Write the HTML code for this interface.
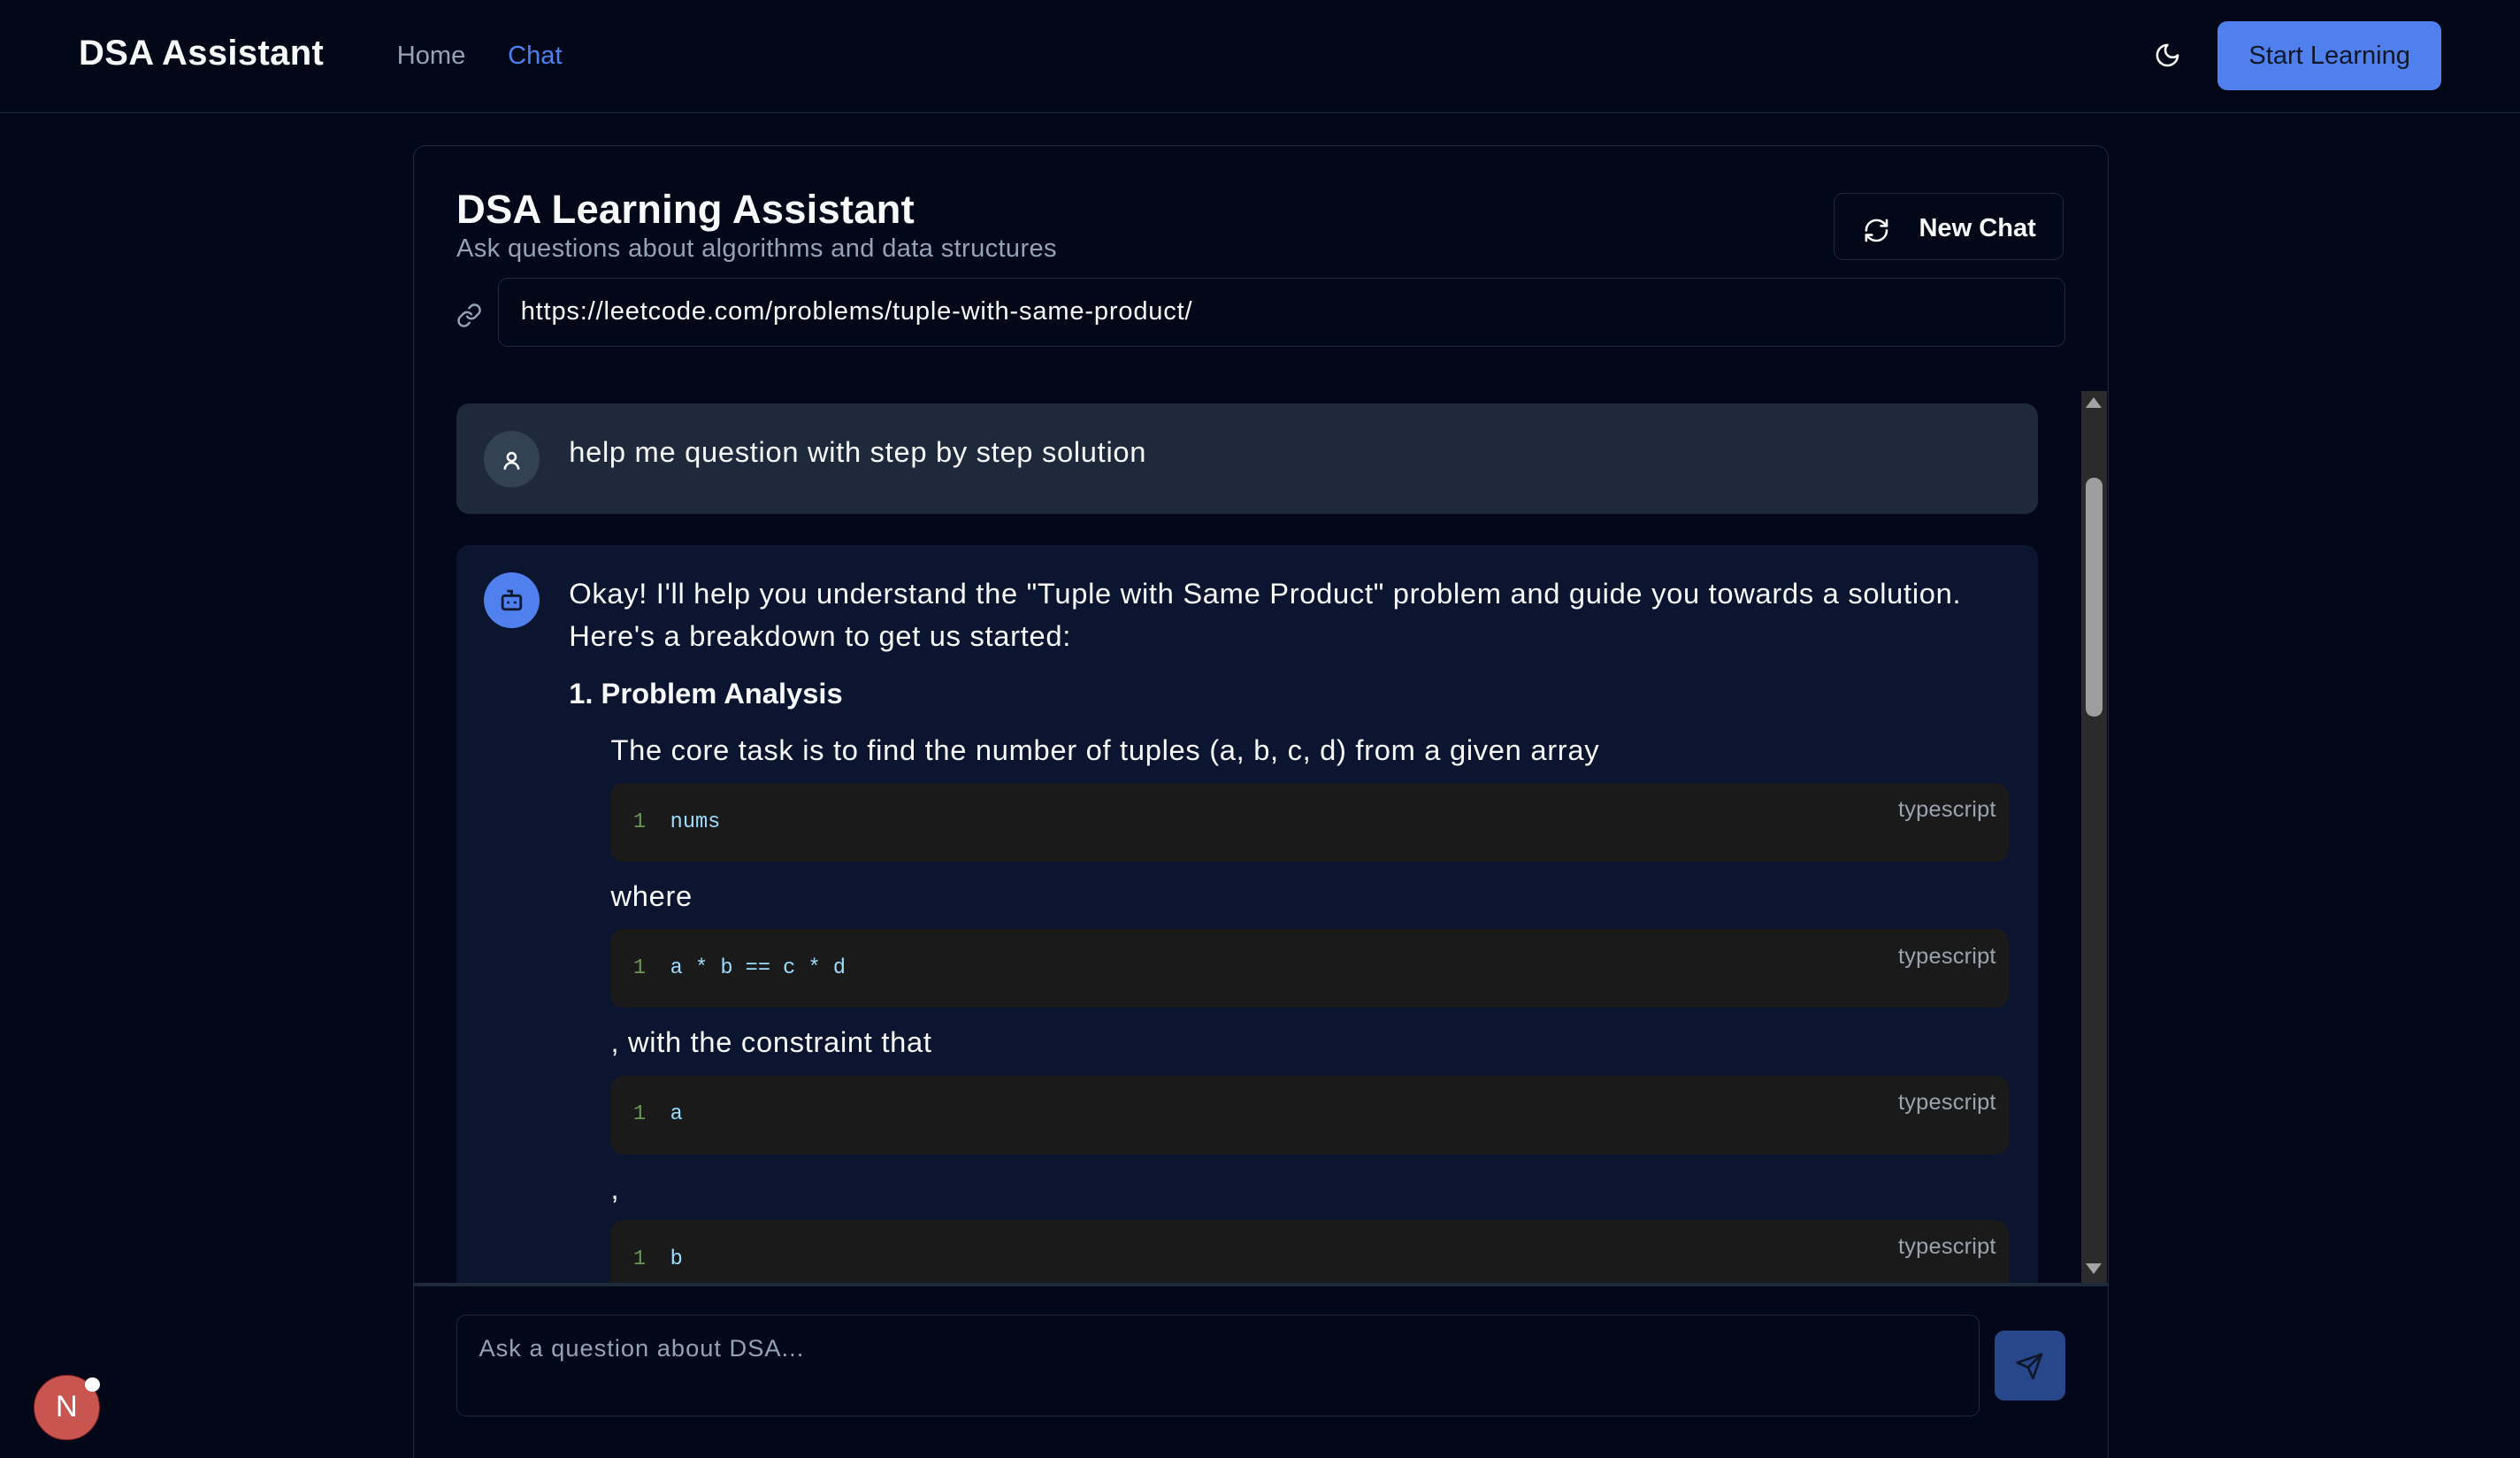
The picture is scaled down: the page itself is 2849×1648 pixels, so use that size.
<!DOCTYPE html>
<html><head><meta charset="utf-8"><style>
html,body{margin:0;padding:0;background:#020817;overflow:hidden}
body{width:1568px;height:907px;zoom:1.81696;position:relative;font-family:"Liberation Sans",sans-serif;color:#f8fafc}
.a{position:absolute}
.hdr{left:0;top:0;width:1568px;height:70px;border-bottom:1px solid #1e293b}
.code{position:absolute;left:380px;width:870px;background:#1a1a1a;border-radius:8px;height:49px}
.code .n{position:absolute;left:14px;top:17px;font:13px "Liberation Mono",monospace;color:#6a9955}
.code .c{position:absolute;left:37px;top:17px;font:13px "Liberation Mono",monospace;color:#9cdcfe}
.code .l{position:absolute;right:8px;top:9px;font-size:14px;color:#9ca3af;letter-spacing:0.1px}
.t{position:absolute;font-size:18px;color:#f8fafc;white-space:nowrap;letter-spacing:0.38px}
</style></head><body>
<div class="a hdr"></div>
<div class="a" style="left:49px;top:21px;font-size:22px;font-weight:bold;letter-spacing:0.2px">DSA Assistant</div>
<div class="a" style="left:247px;top:26px;font-size:16px;color:#94a3b8">Home</div>
<div class="a" style="left:316px;top:26px;font-size:16px;color:#4f80ee">Chat</div>
<svg class="a" style="left:1340px;top:26px" width="17" height="17" viewBox="0 0 24 24" fill="none" stroke="#fff" stroke-width="2" stroke-linecap="round" stroke-linejoin="round"><path d="M12 3a6 6 0 0 0 9 9 9 9 0 1 1-9-9Z"/></svg>
<div class="a" style="left:1380px;top:13px;width:139px;height:43px;background:#4f80ee;border-radius:6px;color:#0f172a;font-size:16px;line-height:43px;text-align:center">Start Learning</div>

<div class="a" style="left:257px;top:90px;width:1054px;height:830px;border:1px solid #1e293b;border-radius:8px"></div>
<div class="a" style="left:284px;top:116px;font-size:25px;font-weight:bold;letter-spacing:0.1px">DSA Learning Assistant</div>
<div class="a" style="left:284px;top:146px;font-size:16px;color:#94a3b8;letter-spacing:0.2px">Ask questions about algorithms and data structures</div>
<div class="a" style="left:1141px;top:120px;width:143px;height:42px;border:1px solid #1e293b;border-radius:6px;box-sizing:border-box"></div>
<svg class="a" style="left:1159px;top:135px" width="17" height="17" viewBox="0 0 24 24" fill="none" stroke="#fff" stroke-width="2" stroke-linecap="round" stroke-linejoin="round"><path d="M3 12a9 9 0 0 1 9-9 9.75 9.75 0 0 1 6.74 2.74L21 8"/><path d="M21 3v5h-5"/><path d="M21 12a9 9 0 0 1-9 9 9.75 9.75 0 0 1-6.74-2.74L3 16"/><path d="M8 16H3v5"/></svg>
<div class="a" style="left:1194px;top:133px;font-size:16px;font-weight:bold">New Chat</div>
<svg class="a" style="left:284px;top:188px" width="16" height="16" viewBox="0 0 24 24" fill="none" stroke="#94a3b8" stroke-width="2" stroke-linecap="round"><path d="M10 13a5 5 0 0 0 7.54.54l3-3a5 5 0 0 0-7.07-7.07l-1.72 1.71"/><path d="M14 11a5 5 0 0 0-7.54-.54l-3 3a5 5 0 0 0 7.07 7.07l1.71-1.71"/></svg>
<div class="a" style="left:310px;top:173px;width:975px;height:43px;border:1px solid #1e293b;border-radius:6px;box-sizing:border-box"></div>
<div class="a" style="left:324px;top:185px;font-size:16px;letter-spacing:0.45px">https://leetcode.com/problems/tuple-with-same-product/</div>

<div class="a" style="left:284px;top:251px;width:984px;height:69px;background:#1e293b;border-radius:8px"></div>
<div class="a" style="left:301px;top:268px;width:35px;height:35px;border-radius:50%;background:#334155"></div>
<svg class="a" style="left:310px;top:278px" width="17" height="17" viewBox="0 0 24 24" fill="none" stroke="#fff" stroke-width="2"><circle cx="12" cy="9" r="3.5"/><path d="M6 20a6 6 0 0 1 12 0"/></svg>
<div class="t" style="left:354px;top:271px">help me question with step by step solution</div>

<div class="a" style="left:257px;top:243px;width:1038px;height:555px;overflow:hidden">
<div class="a" style="left:27px;top:96px;width:984px;height:600px;background:#0b1530;border-radius:8px"></div>
</div>
<div class="a" style="left:301px;top:356px;width:35px;height:35px;border-radius:50%;background:#4f80ee"></div>
<svg class="a" style="left:310px;top:365px" width="17" height="17" viewBox="0 0 24 24" fill="none" stroke="#0f172a" stroke-width="2.2"><path d="M12 8V4H8"/><rect x="4" y="8" width="16" height="12" rx="2"/><path d="M9 13v2M15 13v2"/></svg>
<div class="t" style="left:354px;top:359px">Okay! I'll help you understand the "Tuple with Same Product" problem and guide you towards a solution.</div>
<div class="t" style="left:354px;top:385px">Here's a breakdown to get us started:</div>
<div class="t" style="left:354px;top:421px;font-weight:bold;letter-spacing:0">1. Problem Analysis</div>
<div class="t" style="left:380px;top:456px">The core task is to find the number of tuples (a, b, c, d) from a given array</div>
<div class="code" style="top:487px"><span class="n">1</span><span class="c">nums</span><span class="l">typescript</span></div>
<div class="t" style="left:380px;top:547px">where</div>
<div class="code" style="top:578px"><span class="n">1</span><span class="c">a * b == c * d</span><span class="l">typescript</span></div>
<div class="t" style="left:380px;top:638px">, with the constraint that</div>
<div class="code" style="top:669px"><span class="n">1</span><span class="c">a</span><span class="l">typescript</span></div>
<div class="t" style="left:380px;top:729px">,</div>
<div class="a" style="left:257px;top:759px;width:1038px;height:39px;overflow:hidden"><div class="code" style="top:0;left:123px"><span class="n">1</span><span class="c">b</span><span class="l">typescript</span></div></div>

<div class="a" style="left:1295px;top:243px;width:16px;height:555px;background:#2b2b2b"></div>
<div class="a" style="left:1298px;top:297px;width:10px;height:149px;background:#9e9e9e;border-radius:5px"></div>
<div class="a" style="left:1298px;top:247px;width:0;height:0;border-left:5px solid transparent;border-right:5px solid transparent;border-bottom:7px solid #a3a3a3"></div>
<div class="a" style="left:1298px;top:786px;width:0;height:0;border-left:5px solid transparent;border-right:5px solid transparent;border-top:7px solid #a3a3a3"></div>

<div class="a" style="left:257px;top:798px;width:1055px;height:2px;background:#1e293b"></div>
<div class="a" style="left:284px;top:818px;width:948px;height:63px;border:1px solid #1e293b;border-radius:6px;box-sizing:border-box"></div>
<div class="a" style="left:298px;top:830px;font-size:15px;color:#94a3b8;letter-spacing:0.55px">Ask a question about DSA...</div>
<div class="a" style="left:1241px;top:828px;width:44px;height:43px;background:#27478a;border-radius:6px"></div>
<svg class="a" style="left:1254px;top:841px" width="18" height="18" viewBox="0 0 24 24" fill="none" stroke="#0f172a" stroke-width="2" stroke-linejoin="round"><path d="M22 2 11 13"/><path d="M22 2 15 22l-4-9-9-4Z"/></svg>

<div class="a" style="left:21px;top:855px;width:41px;height:41px;border-radius:50%;background:#c8554f;border:1px solid #7f1d1d;box-sizing:border-box;color:#fff;font-size:19px;text-align:center;line-height:39px">N</div>
<div class="a" style="left:53px;top:857px;width:9px;height:9px;border-radius:50%;background:#fff"></div>
</body></html>
